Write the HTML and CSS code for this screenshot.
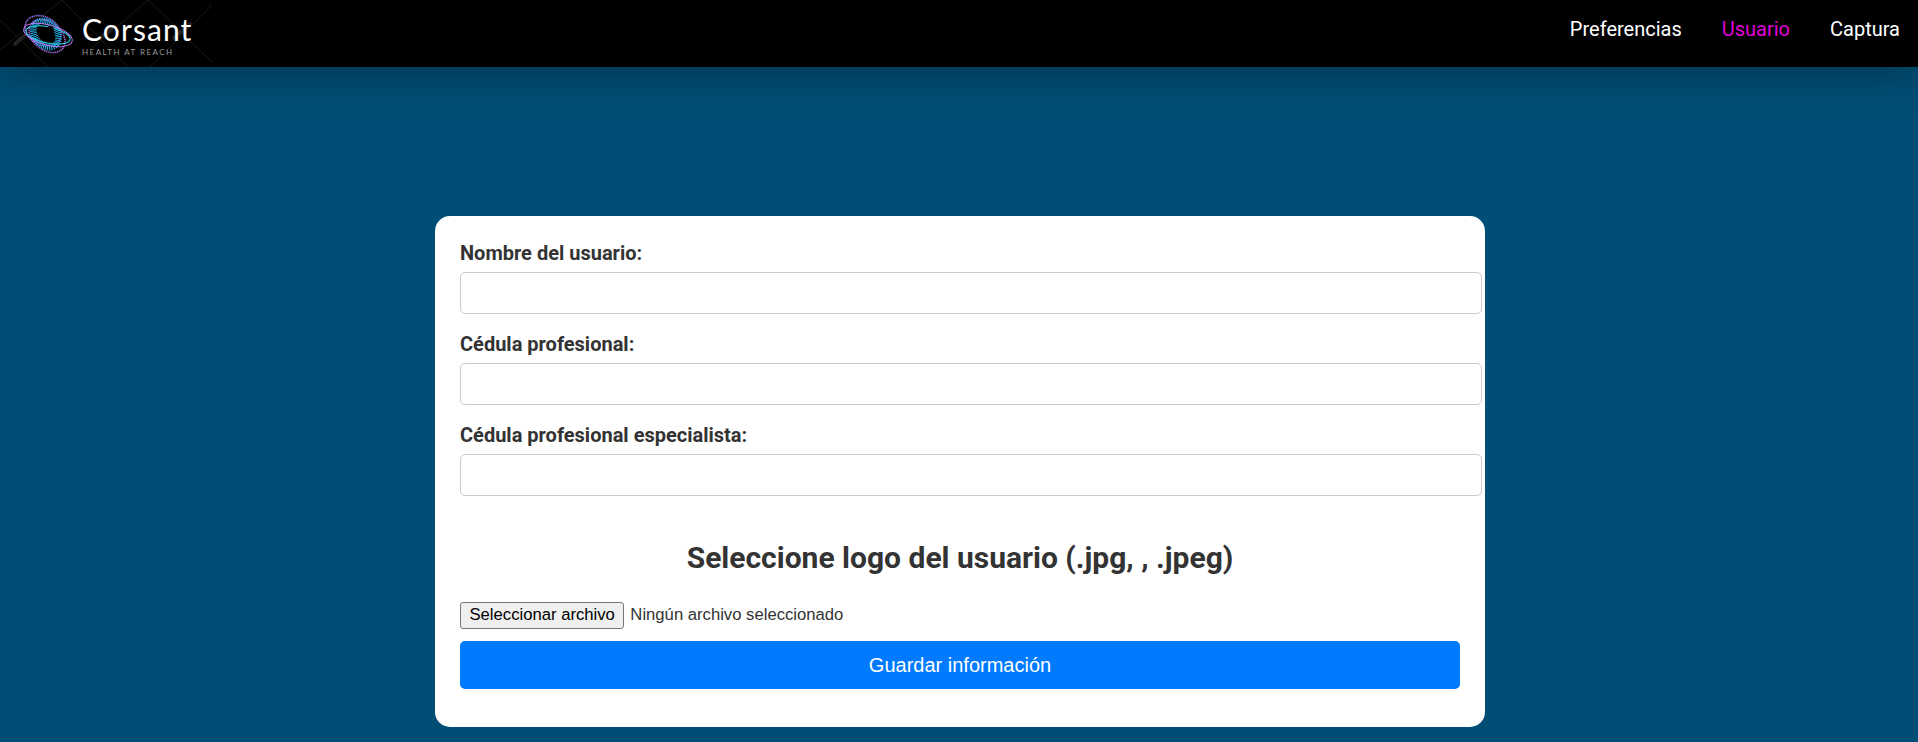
FILE: index.html
```
<!DOCTYPE html>
<html lang="es">
<head>
<meta charset="utf-8">
<title>Usuario</title>
<link rel="stylesheet" href="styles.css">
</head>
<body>
<header class="topbar">
  <div class="brand">
    <svg class="brand-bg" width="212" height="67" viewBox="0 0 212 67" fill="none" stroke="#1a1a1a" stroke-width="1">
      <path d="M0 50 L62 0 M0 20 L48 67 M62 0 L128 67 M148 0 L212 62 M212 5 L150 67 M148 0 L90 50"/>
      <g stroke="#222" stroke-width="4" stroke-linecap="round" stroke-dasharray="2 2">
        <path d="M15 44 L24 36 M103 36 L113 27 M174 38 L190 24"/>
      </g>
    </svg>
    <svg class="brand-mark" width="54" height="40" viewBox="0 0 54 40" fill="none">
      <ellipse cx="22" cy="17" rx="19" ry="14" transform="rotate(30 22 17)" stroke="#9a70f0" stroke-width="1.6" stroke-dasharray="1.2 .7"/>
      <ellipse cx="26" cy="22" rx="20" ry="14" transform="rotate(38 26 22)" stroke="#a86ce8" stroke-width="1.6" stroke-dasharray="1.2 .7"/>
      <ellipse cx="25" cy="20" rx="14.5" ry="11" transform="rotate(50 25 20)" stroke="#22b4e6" stroke-width="6.5" stroke-dasharray="1 .9"/>
      <ellipse cx="27" cy="21" rx="25" ry="10" transform="rotate(15 27 21)" stroke="#b878f2" stroke-width="1"/>
      <ellipse cx="27" cy="21" rx="22.5" ry="8" transform="rotate(12 27 21)" stroke="#2cd6ee" stroke-width="1"/>
      <ellipse cx="28" cy="19" rx="4.5" ry="7.5" transform="rotate(20 28 19)" fill="#000"/>
    </svg>
    <div class="brand-text">
      <span class="brand-name">Corsant</span>
      <span class="brand-tag">HEALTH AT REACH</span>
    </div>
  </div>
  <nav class="nav">
    <a class="nav-link" href="#">Preferencias</a>
    <a class="nav-link nav-active" href="#">Usuario</a>
    <a class="nav-link" href="#">Captura</a>
  </nav>
</header>
<main class="page">
  <form class="card">
    <label class="field-label" for="nombre">Nombre del usuario:</label>
    <input class="field-input" id="nombre" type="text">
    <label class="field-label" for="cedula">Cédula profesional:</label>
    <input class="field-input" id="cedula" type="text">
    <label class="field-label" for="especialista">Cédula profesional especialista:</label>
    <input class="field-input" id="especialista" type="text">
    <h2 class="logo-title">Seleccione logo del usuario (.jpg, , .jpeg)</h2>
    <div class="file-row">
      <button class="file-button" type="button">Seleccionar archivo</button>
      <span class="file-name">Ningún archivo seleccionado</span>
    </div>
    <button class="submit" type="button">Guardar información</button>
  </form>
</main>
</body>
</html>
```
FILE: styles.css
```
* { box-sizing: border-box; }
html, body { margin: 0; padding: 0; }
body {
  height: 742px;
  overflow: hidden;
  background: #004e75;
  font-family: Roboto, sans-serif;
  color: #333;
}
.topbar {
  display: flex;
  justify-content: space-between;
  align-items: center;
  height: 67px;
  background: #000;
  box-shadow: 0 8px 40px rgba(0, 0, 0, 0.3);
  position: relative;
}
.brand {
  position: relative;
  width: 212px;
  height: 67px;
  display: flex;
  align-items: center;
}
.brand-bg { position: absolute; left: 0; top: 0; }
.brand-mark { position: relative; margin-left: 21px; margin-top: 1px; flex: none; }
.brand-text {
  position: relative;
  display: flex;
  flex-direction: column;
  margin-left: 7px;
  margin-top: 3px;
}
.brand-name {
  font-family: Lato, sans-serif;
  font-weight: 400;
  font-size: 30px;
  line-height: 30px;
  color: #fff;
  letter-spacing: 1.1px;
}
.brand-tag {
  font-family: Lato, sans-serif;
  font-size: 8px;
  line-height: 9px;
  letter-spacing: 1.45px;
  color: #999;
  margin-top: 4px;
}
.nav {
  display: flex;
  gap: 40px;
  padding-right: 18px;
  margin-top: -9px;
}
.nav-link {
  font-size: 20px;
  color: #fff;
  text-decoration: none;
}
.nav-active { color: #e000d8; }
.page {
  display: flex;
  justify-content: center;
  padding-top: 149px;
  padding-left: 2px;
}
.card {
  width: 1050px;
  height: 511px;
  background: #fff;
  border-radius: 15px;
  padding: 26px 25px 25px;
}
.field-label {
  display: block;
  font-weight: 700;
  font-size: 20px;
  line-height: 22px;
  margin-bottom: 8px;
}
.field-input {
  display: block;
  width: 1022px;
  height: 42px;
  border: 1px solid #ccc;
  border-radius: 5px;
  margin-bottom: 19px;
  background: #fff;
}
.logo-title {
  font-size: 30px;
  line-height: 36px;
  font-weight: 700;
  text-align: center;
  margin: 44px 0 26px;
}
.file-row {
  display: flex;
  align-items: center;
  gap: 6px;
  margin-bottom: 12px;
}
.file-button {
  font-family: "Liberation Sans", Arial, sans-serif;
  font-size: 16.67px;
  height: 27px;
  padding: 0 8.5px 2px;
  border: 1px solid #767676;
  border-radius: 3px;
  background: #efefef;
  color: #000;
}
.file-name {
  font-family: "Liberation Sans", Arial, sans-serif;
  font-size: 16.67px;
  padding-bottom: 2px;
}
.submit {
  display: block;
  width: 1000px;
  height: 48px;
  border: 0;
  border-radius: 5px;
  background: #007bff;
  color: #fff;
  font-family: "Liberation Sans", Arial, sans-serif;
  font-size: 20px;
}
```
